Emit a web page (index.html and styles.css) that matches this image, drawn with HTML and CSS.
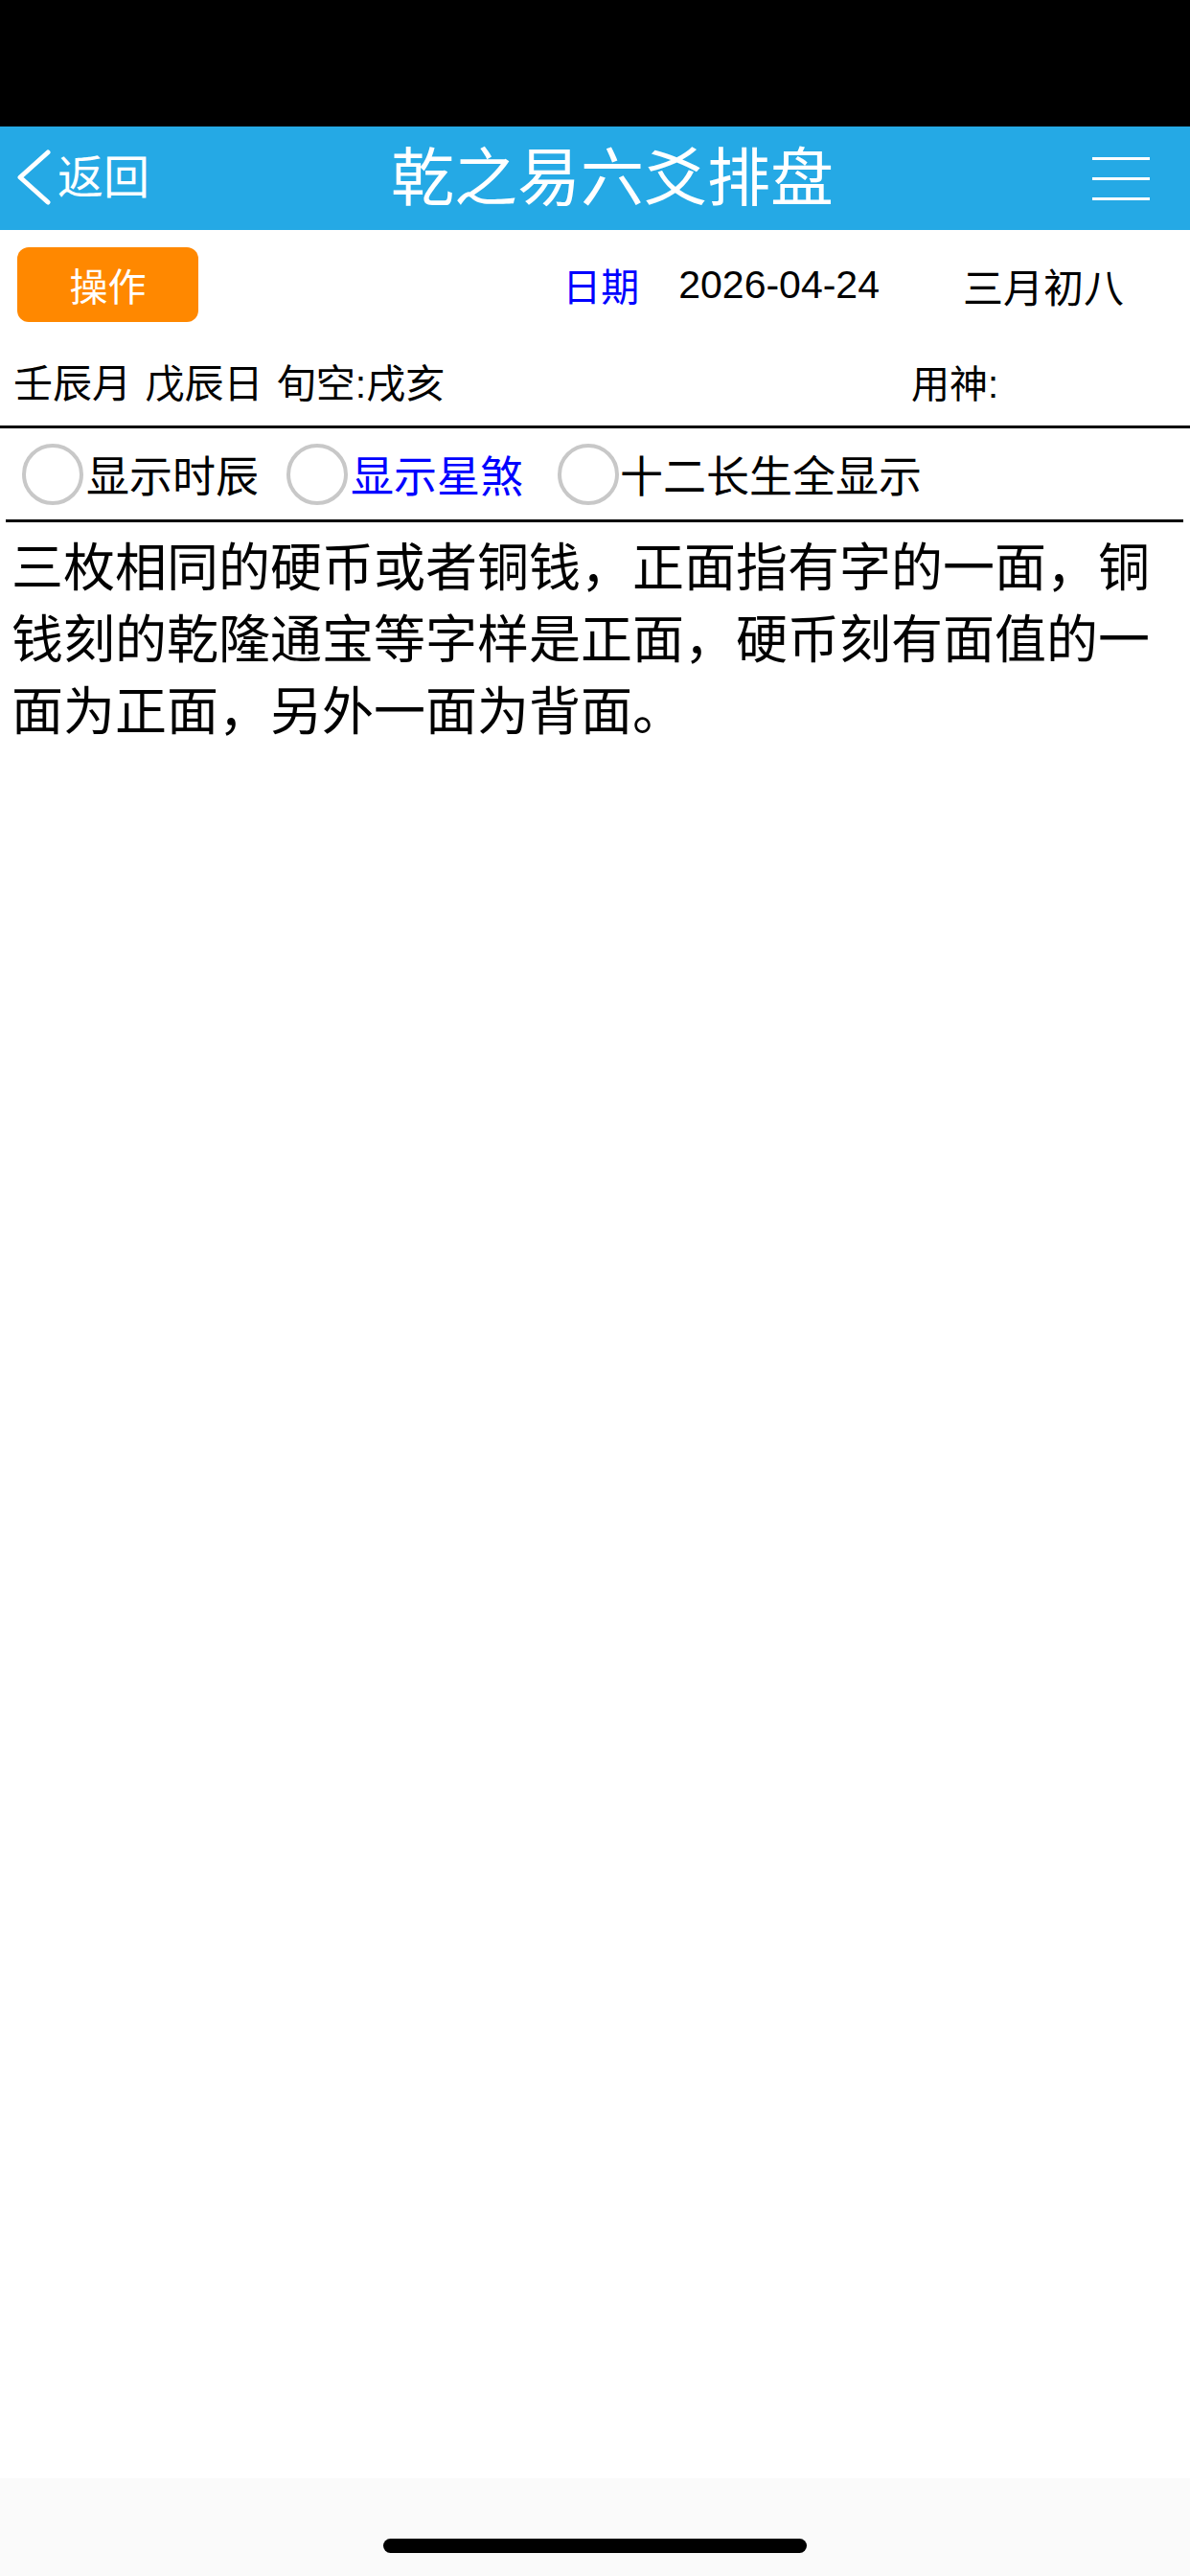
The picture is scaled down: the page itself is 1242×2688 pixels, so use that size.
FILE: index.html
```html
<!DOCTYPE html>
<html lang="zh-CN">
<head>
<meta charset="utf-8">
<title>乾之易六爻排盘</title>
<link rel="stylesheet" href="styles.css">
</head>
<body>
<div class="status"></div>
<header class="nav">
  <div class="back">
    <svg class="chev" viewBox="0 0 42 60" width="42" height="60"><polyline points="36,3 7,29 36,55" fill="none" stroke="#fff" stroke-width="5" stroke-linecap="round" stroke-linejoin="round"/></svg>
    <span class="back-text">返回</span>
  </div>
  <div class="title">乾之易六爻排盘</div>
  <div class="menu"><span></span><span></span><span></span></div>
</header>
<main class="content">
  <div class="toolbar">
    <div class="btn">操作</div>
    <div class="dates">
      <span class="date-label">日期</span>
      <span class="date-val">2026-04-24</span>
      <span class="lunar">三月初八</span>
    </div>
  </div>
  <div class="info">
    <span class="ganzhi">壬辰月 戊辰日 旬空:戌亥</span>
    <span class="yongshen">用神:</span>
  </div>
  <div class="options">
    <div class="opt"><span class="radio"></span><span class="opt-label">显示时辰</span></div>
    <div class="opt"><span class="radio"></span><span class="opt-label blue">显示星煞</span></div>
    <div class="opt opt-last"><span class="radio"></span><span class="opt-label">十二长生全显示</span></div>
  </div>
  <div class="rule"></div>
  <p class="desc">三枚相同的硬币或者铜钱，正面指有字的一面，铜钱刻的乾隆通宝等字样是正面，硬币刻有面值的一面为正面，另外一面为背面。</p>
</main>
<div class="home"><div class="home-bar"></div></div>
</body>
</html>
```

FILE: styles.css
```css
* { box-sizing: border-box; }
html, body { margin: 0; padding: 0; }
body {
  width: 1242px;
  min-height: 2688px;
  display: flex;
  flex-direction: column;
  background: #fff;
  color: #000;
  font-family: "Liberation Sans", "Noto Sans CJK SC", sans-serif;
}
.status { height: 132px; background: #000; }
.nav {
  height: 108px;
  background: #25a9e5;
  color: #fff;
  display: flex;
  align-items: center;
}
.back {
  width: 178px;
  display: flex;
  align-items: center;
  padding-left: 14px;
}
.chev { display: block; }
.back-text { font-size: 48px; margin-left: 4px; line-height: 1; }
.title {
  flex: 1;
  text-align: center;
  font-size: 66px;
  line-height: 1;
}
.menu {
  width: 142px;
  display: flex;
  flex-direction: column;
  gap: 18px;
  padding-left: 40px;
}
.menu span { display: block; width: 60px; height: 3px; background: #fff; }
.content { flex: 1; }
.toolbar {
  display: flex;
  align-items: center;
  padding: 18px 0 0 18px;
}
.btn {
  width: 189px;
  height: 78px;
  background: #ff8800;
  border-radius: 12px;
  color: #fff;
  font-size: 40px;
  display: flex;
  align-items: center;
  justify-content: center;
}
.dates {
  margin-left: auto;
  padding-right: 69px;
  display: flex;
  align-items: center;
  font-size: 40px;
}
.date-label { color: #0000ff; }
.date-val { margin-left: 41px; font-size: 41px; }
.lunar { margin-left: 87px; font-size: 42px; }
.info {
  display: flex;
  padding: 37px 0 15px 14px;
  font-size: 41px;
  line-height: 56px;
}
.ganzhi { word-spacing: 3px; }
.yongshen { margin-left: auto; width: 291px; font-size: 40px; }
.options {
  border-top: 3px solid #000;
  height: 98px;
  display: flex;
  align-items: center;
  gap: 29px;
  padding-left: 23px;
}
.opt { display: flex; align-items: center; gap: 3px; }
.opt-last { margin-left: 7px; gap: 1px; }
.radio {
  width: 64px;
  height: 64px;
  border: 4px solid #c8c8c8;
  border-radius: 50%;
  display: block;
}
.opt-label { font-size: 45px; }
.blue { color: #0000ff; }
.rule { height: 3px; background: #000; margin: 0 7px 0 6px; }
.desc {
  margin: 0;
  padding: 11px 12px 0;
  font-size: 54px;
  line-height: 75px;
}
.home {
  height: 102px;
  background: #fafafa;
  display: flex;
  justify-content: center;
  padding-top: 63px;
}
.home-bar { width: 442px; height: 15px; border-radius: 8px; background: #000; }
```
